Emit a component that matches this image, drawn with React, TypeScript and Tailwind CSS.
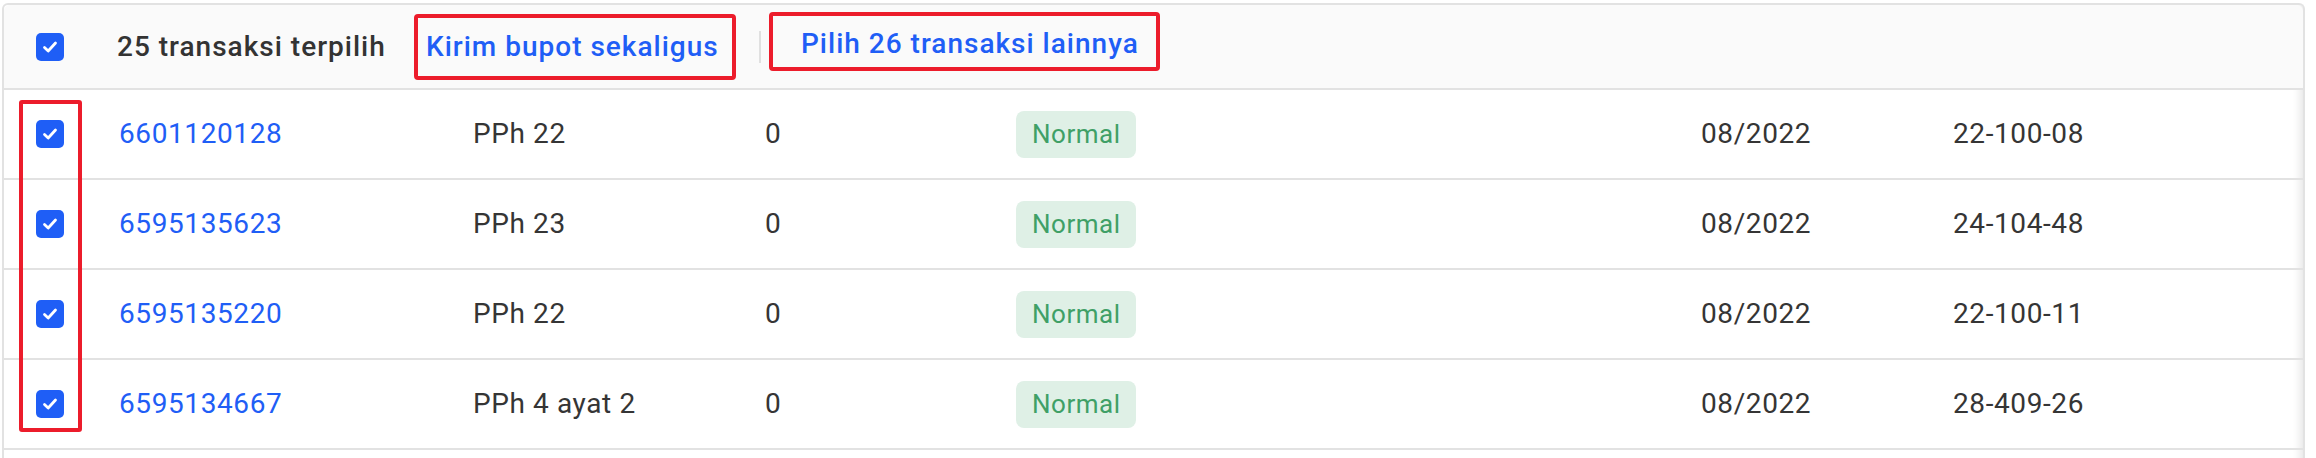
import React from "react";

type Row = { id: string; type: string; amount: string; status: string; period: string; code: string };

const rows: Row[] = [
    { id: "6601120128", type: "PPh 22", amount: "0", status: "Normal", period: "08/2022", code: "22-100-08" },
    { id: "6595135623", type: "PPh 23", amount: "0", status: "Normal", period: "08/2022", code: "24-104-48" },
    { id: "6595135220", type: "PPh 22", amount: "0", status: "Normal", period: "08/2022", code: "22-100-11" },
    { id: "6595134667", type: "PPh 4 ayat 2", amount: "0", status: "Normal", period: "08/2022", code: "28-409-26" },
];

function Checkbox() {
    return (
        <span className="w-[28px] h-[28px] rounded-[5px] bg-[#1f5ef6] flex items-center justify-center">
            <svg width="18" height="18" viewBox="0 0 18 18" fill="none">
                <path d="M3.5 9.5 L7.2 13 L14.5 5" stroke="white" strokeWidth="2.8" strokeLinecap="round" strokeLinejoin="round" />
            </svg>
        </span>
    );
}

export default function App() {
    return (
        <div className="w-[2316px] h-[458px] bg-white pt-[3px] pl-[2px] pr-[11px] overflow-hidden font-['Roboto',sans-serif] text-[#333333]">
            <div className="relative h-full border-t-2 border-l-2 border-r-2 border-[#e2e2e2] rounded-t-[6px] shadow-[inset_-14px_0_10px_-12px_rgba(0,0,0,0.12)]">
                {/* Selection bar */}
                <div className="h-[85px] bg-[#fafafa] border-b-2 border-[#e2e2e2] flex items-center rounded-t-[6px]">
                    <div className="w-[113px] pl-[32px] flex items-center">
                        <Checkbox />
                    </div>
                    <span className="text-[28px] font-medium tracking-[1px] w-[297px]">25 transaksi terpilih</span>
                    <button className="h-[66px] w-[322px] border-[4px] border-[#ec1c2b] rounded-[4px] pl-[8px] flex items-center text-[28px] font-medium tracking-[1px] text-[#1f5ef6]">
                        Kirim bupot sekaligus
                    </button>
                    <span className="ml-[23px] w-[2px] h-[32px] bg-[#e0e0e0]" />
                    <button className="ml-[8px] self-start mt-[7px] h-[59px] w-[391px] border-[4px] border-[#ec1c2b] rounded-[4px] pl-[28px] pt-[4px] flex items-center text-[28px] font-medium tracking-[1px] text-[#1f5ef6]">
                        Pilih 26 transaksi lainnya
                    </button>
                </div>

                {/* Rows */}
                {rows.map((row) => (
                    <div key={row.id} className="h-[90px] border-b-2 border-[#e2e2e2] flex items-center text-[28px] tracking-[0.6px] text-[#353535]">
                        <div className="w-[115px] pl-[32px] flex items-center">
                            <Checkbox />
                        </div>
                        <span className="w-[354px] text-[#1f5ef6]">{row.id}</span>
                        <span className="w-[292px]">{row.type}</span>
                        <span className="w-[251px]">{row.amount}</span>
                        <div className="w-[685px]">
                            <span className="inline-flex items-center h-[47px] px-[16px] rounded-[8px] bg-[#dff0e6] text-[#40a066] text-[26px] tracking-[0.5px]">
                                {row.status}
                            </span>
                        </div>
                        <span className="w-[252px]">{row.period}</span>
                        <span>{row.code}</span>
                    </div>
                ))}

                {/* annotation over the row checkboxes */}
                <div className="absolute left-[15px] top-[95px] w-[63px] h-[332px] border-[4px] border-[#ec1c2b] rounded-[3px] pointer-events-none" />
            </div>
        </div>
    );
}
